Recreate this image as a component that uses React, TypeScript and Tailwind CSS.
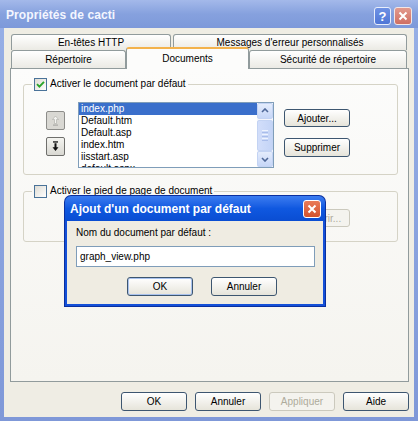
import React from "react";

const btn =
  "flex items-center justify-center rounded-[3px] border border-[#3d5670] bg-gradient-to-b from-[#ffffff] to-[#e6e4da] text-[10px] text-black";

function CheckBox({ checked }: { checked?: boolean }) {
  return (
    <div className="w-[13px] h-[13px] border border-[#4a7399] bg-gradient-to-br from-[#dedcd4] to-[#ffffff] flex items-center justify-center">
      {checked && (
        <svg width="9" height="9" viewBox="0 0 9 9">
          <path d="M1 4.2 L3.4 6.6 L8 1.8" stroke="#2aa52a" strokeWidth="1.9" fill="none" />
        </svg>
      )}
    </div>
  );
}

function Tab({ label, w, selected }: { label: string; w: number; selected?: boolean }) {
  if (selected) {
    return (
      <div
        className="relative z-10 -mb-[1px] h-[22px] w-[123px] rounded-t-[3px] border-x border-t-[2px] border-x-[#919b9c] border-t-[#f3b24c] bg-[#fcfcfb] flex items-start justify-center pt-[2px] text-[10px] text-black"
      >
        {label}
      </div>
    );
  }
  return (
    <div
      style={{ width: w }}
      className="h-full rounded-t-[3px] border-x border-t border-[#919b9c] bg-gradient-to-b from-[#ffffff] to-[#ebeae4] flex items-center justify-center text-[10px] text-black"
    >
      {label}
    </div>
  );
}

export default function App() {
  return (
    <div
      className="relative w-[418px] h-[421px] overflow-hidden bg-gradient-to-b from-[#98b0e6] to-[#7f98d8] flex flex-col"
      style={{ fontFamily: '"Liberation Sans", Arial, sans-serif' }}
    >
      {/* title bar */}
      <div className="h-[28px] flex items-start justify-between pl-[6px] pr-[6px] pt-[7px] bg-gradient-to-b from-[#a4b9ea] via-[#86a1de] to-[#7d99da]">
        <div className="text-[12px] font-bold text-[#f4f6ff] leading-[16px] tracking-[0.1px]">Propriétés de cacti</div>
        <div className="flex gap-[3px]">
          <div className="w-[17px] h-[18px] rounded-[3px] border border-[#e8eefc] bg-gradient-to-b from-[#6f92e4] to-[#4f76d6] flex items-center justify-center text-white text-[13px] font-bold leading-none">
            ?
          </div>
          <div className="w-[18px] h-[18px] rounded-[3px] border border-[#f2e6e6] bg-gradient-to-b from-[#e29a8e] to-[#cf6f62] flex items-center justify-center">
            <svg width="10" height="10" viewBox="0 0 10 10">
              <path d="M1.5 1.5 L8.5 8.5 M8.5 1.5 L1.5 8.5" stroke="#ffffff" strokeWidth="2" />
            </svg>
          </div>
        </div>
      </div>

      {/* body */}
      <div className="flex-1 mx-[4px] mb-[4px] bg-[#efede4] pl-[6px] pr-[6px] pt-[6px] flex flex-col">
        {/* tabs */}
        <div className="flex flex-col w-[399px]">
          <div className="h-[16px] flex gap-[2px] pl-[1px]">
            <Tab label="En-têtes HTTP" w={160} />
            <Tab label="Messages d'erreur personnalisés" w={234} />
          </div>
          <div className="h-[18px] flex items-end pl-[1px]">
            <div className="h-[18px] flex">
              <Tab label="Répertoire" w={115} />
            </div>
            <Tab label="Documents" w={123} selected />
            <div className="h-[18px] flex">
              <Tab label="Sécurité de répertoire" w={158} />
            </div>
          </div>
        </div>

        {/* panel */}
        <div className="w-[399px] h-[314px] border border-[#919b9c] bg-gradient-to-b from-[#fcfcfb] to-[#f5f4ef] flex flex-col">
          {/* group 1 */}
          <fieldset className="ml-[12px] mt-[9px] w-[375px] rounded-[3px] border border-[#d5d3c6] pb-[6px]">
            <legend className="ml-[8px] px-[2px] flex items-center gap-[3px] h-[12px] text-[10px] text-black leading-[12px]">
              <CheckBox checked />
              <span>Activer le document par défaut</span>
            </legend>
            <div className="flex items-start">
              <div className="ml-[22px] pt-[21px] flex flex-col gap-[7px]">
                <div className="w-[19px] h-[19px] rounded-[2px] border border-[#8d8d8a] bg-[#d9d8d3] flex items-center justify-center">
                  <svg width="7" height="11" viewBox="0 0 7 11">
                    <path d="M3.5 1 L6.5 4.5 L4.5 4.5 L4.5 8.5 L2.5 8.5 L2.5 4.5 L0.5 4.5 Z" fill="#f5f5f2" stroke="#a9a9a5" strokeWidth="0.6" />
                    <rect x="1" y="9.5" width="5" height="1.2" fill="#a9a9a5" />
                  </svg>
                </div>
                <div className="w-[19px] h-[19px] rounded-[2px] border border-[#6f6f6c] bg-gradient-to-b from-[#f4f4f0] to-[#d9d8d2] flex items-center justify-center">
                  <svg width="7" height="11" viewBox="0 0 7 11">
                    <rect x="1" y="0.3" width="5" height="1.3" fill="#111" />
                    <path d="M2.5 2.2 L4.5 2.2 L4.5 6.2 L6.5 6.2 L3.5 10 L0.5 6.2 L2.5 6.2 Z" fill="#111" />
                  </svg>
                </div>
              </div>
              <div className="ml-[13px] mt-[12px] w-[196px] h-[66px] border border-[#7f9db9] bg-white flex overflow-hidden">
                <div className="flex-1 flex flex-col text-[10px] leading-[12px] text-black overflow-hidden">
                  <div className="h-[12px] shrink-0 bg-[#3a6fcb] text-white pl-[2px]">index.php</div>
                  <div className="h-[12px] shrink-0 pl-[2px]">Default.htm</div>
                  <div className="h-[12px] shrink-0 pl-[2px]">Default.asp</div>
                  <div className="h-[12px] shrink-0 pl-[2px]">index.htm</div>
                  <div className="h-[12px] shrink-0 pl-[2px]">iisstart.asp</div>
                  <div className="h-[12px] shrink-0 pl-[2px]">default.aspx</div>
                </div>
                <div className="w-[16px] bg-[#f4f5fb] flex flex-col">
                  <div className="h-[16px] rounded-[2px] border border-[#c3d3f3] bg-gradient-to-b from-[#e4ecfc] to-[#c6d6f7] flex items-center justify-center">
                    <svg width="8" height="5" viewBox="0 0 8 5">
                      <path d="M1 4 L4 1 L7 4" stroke="#4f6898" strokeWidth="1.6" fill="none" />
                    </svg>
                  </div>
                  <div className="h-[32px] mt-[1px] rounded-[2px] border border-[#c3d3f3] bg-gradient-to-r from-[#d2defa] to-[#c4d4f6] flex flex-col items-center justify-center gap-[1px]">
                    <div className="w-[6px] h-[1px] bg-[#eef3fe]" />
                    <div className="w-[6px] h-[1px] bg-[#a9bdea]" />
                    <div className="w-[6px] h-[1px] bg-[#eef3fe]" />
                    <div className="w-[6px] h-[1px] bg-[#a9bdea]" />
                    <div className="w-[6px] h-[1px] bg-[#eef3fe]" />
                    <div className="w-[6px] h-[1px] bg-[#a9bdea]" />
                  </div>
                  <div className="flex-1" />
                  <div className="h-[16px] rounded-[2px] border border-[#c3d3f3] bg-gradient-to-b from-[#e4ecfc] to-[#c6d6f7] flex items-center justify-center">
                    <svg width="8" height="5" viewBox="0 0 8 5">
                      <path d="M1 1 L4 4 L7 1" stroke="#4f6898" strokeWidth="1.6" fill="none" />
                    </svg>
                  </div>
                </div>
              </div>
              <div className="ml-[10px] pt-[19px] flex flex-col gap-[11px]">
                <div className={`${btn} w-[66px] h-[18px]`}>Ajouter...</div>
                <div className={`${btn} w-[66px] h-[19px]`}>Supprimer</div>
              </div>
            </div>
          </fieldset>

          {/* group 2 */}
          <fieldset className="ml-[12px] mt-[10px] w-[375px] rounded-[3px] border border-[#d5d3c6] pb-[14px]">
            <legend className="ml-[8px] px-[2px] flex items-center gap-[3px] h-[12px] text-[10px] text-black leading-[12px]">
              <CheckBox />
              <span>Activer le pied de page de document</span>
            </legend>
            <div className="flex pl-[260px] pt-[12px]">
              <div className="w-[66px] h-[18px] rounded-[3px] border border-[#cbc9bd] bg-[#f4f3ee] flex items-center justify-center text-[10px] text-[#aeab9c]">
                Parcourir...
              </div>
            </div>
          </fieldset>
        </div>

        {/* bottom buttons */}
        <div className="w-[399px] mt-[10px] flex justify-end gap-[8px]">
          <div className={`${btn} w-[66px] h-[19px]`}>OK</div>
          <div className={`${btn} w-[66px] h-[19px]`}>Annuler</div>
          <div className="w-[66px] h-[19px] rounded-[3px] border border-[#cbc9bd] bg-[#f4f3ee] flex items-center justify-center text-[10px] text-[#aeab9c]">
            Appliquer
          </div>
          <div className={`${btn} w-[66px] h-[19px]`}>Aide</div>
        </div>
      </div>

      {/* dialog */}
      <div className="absolute left-[64px] top-[195px] w-[262px] h-[112px] rounded-t-[7px] bg-[#0a2f9e] p-[1px] flex flex-col">
        <div className="h-[25px] rounded-t-[6px] bg-gradient-to-b from-[#3b7cf0] via-[#0f58e0] to-[#0a4dd2] flex items-center justify-between pl-[5px] pr-[4px]">
          <div className="text-[12px] font-bold text-white leading-none">Ajout d'un document par défaut</div>
          <div className="w-[18px] h-[18px] rounded-[3px] border border-white bg-gradient-to-b from-[#ea7b57] to-[#d2522e] flex items-center justify-center">
            <svg width="10" height="10" viewBox="0 0 10 10">
              <path d="M1.5 1.5 L8.5 8.5 M8.5 1.5 L1.5 8.5" stroke="#ffffff" strokeWidth="2" />
            </svg>
          </div>
        </div>
        <div className="flex-1 border-x-[2px] border-b-[2px] border-[#1450d8] bg-[#efece2] flex flex-col pl-[9px] pr-[8px]">
          <div className="mt-[6px] text-[10px] leading-[12px] text-black">Nom du document par défaut :</div>
          <div className="mt-[7px] w-[239px] h-[21px] border border-[#7f9db9] bg-white flex items-center pl-[3px] text-[10px] text-black">
            graph_view.php
          </div>
          <div className="mt-[10px] flex pl-[51px] gap-[18px]">
            <div className="w-[66px] h-[19px] rounded-[3px] border border-[#3d5670] shadow-[inset_0_0_0_1px_#a9c2ee] bg-gradient-to-b from-[#ffffff] to-[#e6e4da] flex items-center justify-center text-[10px] text-black">
              OK
            </div>
            <div className={`${btn} w-[66px] h-[19px]`}>Annuler</div>
          </div>
        </div>
      </div>
    </div>
  );
}
